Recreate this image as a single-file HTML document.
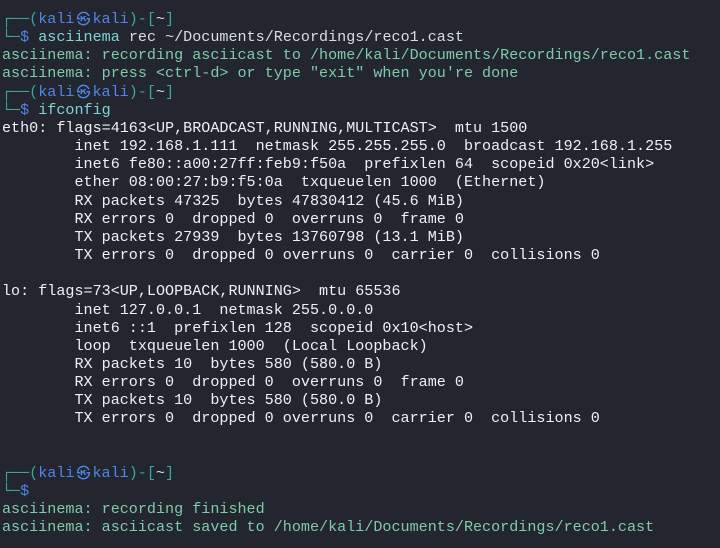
<!DOCTYPE html>
<html><head><meta charset="utf-8"><style>
html,body{margin:0;padding:0;background:#23262e;width:720px;height:548px;overflow:hidden}
pre{margin:0;padding:10px 0 0 2px;font-family:"Liberation Mono","DejaVu Sans Mono","Noto Sans CJK JP",monospace;font-size:15.1px;line-height:18.15px;color:#eef0f2;white-space:pre}
.f{color:#3aa6a0}.b{color:#4f86e8}.g{color:#7ecbaa}.c{color:#7fd3d6}.w{color:#d8dde3}
.k{display:inline-block;width:18px;text-align:center;font-family:"DejaVu Sans","Noto Sans CJK JP",sans-serif;font-size:14px;line-height:14px;vertical-align:-1px}
</style></head><body><pre><span class="f">┌──(</span><span class="b">kali<span class="k">㉿</span>kali</span><span class="f">)-[</span><span class="w">~</span><span class="f">]</span>
<span class="f">└─</span><span class="b">$</span> <span class="c">asciinema</span><span class="w"> rec ~/Documents/Recordings/reco1.cast</span>
<span class="g">asciinema: recording asciicast to /home/kali/Documents/Recordings/reco1.cast</span>
<span class="g">asciinema: press &lt;ctrl-d&gt; or type "exit" when you're done</span>
<span class="f">┌──(</span><span class="b">kali<span class="k">㉿</span>kali</span><span class="f">)-[</span><span class="w">~</span><span class="f">]</span>
<span class="f">└─</span><span class="b">$</span> <span class="c">ifconfig</span>
eth0: flags=4163&lt;UP,BROADCAST,RUNNING,MULTICAST&gt;  mtu 1500
        inet 192.168.1.111  netmask 255.255.255.0  broadcast 192.168.1.255
        inet6 fe80::a00:27ff:feb9:f50a  prefixlen 64  scopeid 0x20&lt;link&gt;
        ether 08:00:27:b9:f5:0a  txqueuelen 1000  (Ethernet)
        RX packets 47325  bytes 47830412 (45.6 MiB)
        RX errors 0  dropped 0  overruns 0  frame 0
        TX packets 27939  bytes 13760798 (13.1 MiB)
        TX errors 0  dropped 0 overruns 0  carrier 0  collisions 0

lo: flags=73&lt;UP,LOOPBACK,RUNNING&gt;  mtu 65536
        inet 127.0.0.1  netmask 255.0.0.0
        inet6 ::1  prefixlen 128  scopeid 0x10&lt;host&gt;
        loop  txqueuelen 1000  (Local Loopback)
        RX packets 10  bytes 580 (580.0 B)
        RX errors 0  dropped 0  overruns 0  frame 0
        TX packets 10  bytes 580 (580.0 B)
        TX errors 0  dropped 0 overruns 0  carrier 0  collisions 0


<span class="f">┌──(</span><span class="b">kali<span class="k">㉿</span>kali</span><span class="f">)-[</span><span class="w">~</span><span class="f">]</span>
<span class="f">└─</span><span class="b">$</span>
<span class="g">asciinema: recording finished</span>
<span class="g">asciinema: asciicast saved to /home/kali/Documents/Recordings/reco1.cast</span></pre></body></html>
